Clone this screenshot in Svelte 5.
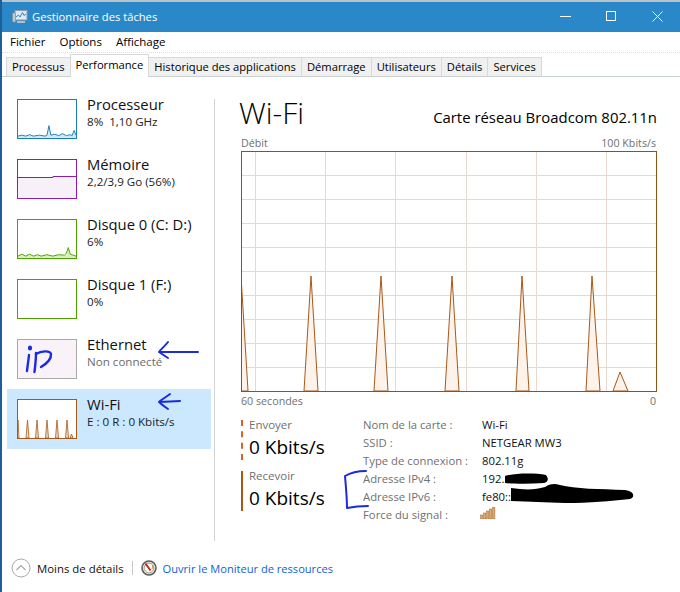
<script>
  const tabs = ['Processus', 'Performance', 'Historique des applications', 'Démarrage', 'Utilisateurs', 'Détails', 'Services'];

  const devices = [
    { name: 'Processeur', sub: '8%  1,10 GHz', kind: 'cpu' },
    { name: 'Mémoire', sub: '2,2/3,9 Go (56%)', kind: 'mem' },
    { name: 'Disque 0 (C: D:)', sub: '6%', kind: 'disk0' },
    { name: 'Disque 1 (F:)', sub: '0%', kind: 'disk1' },
    { name: 'Ethernet', sub: 'Non connecté', kind: 'eth' },
    { name: 'Wi-Fi', sub: 'E : 0 R : 0 Kbits/s', kind: 'wifi' }
  ];

  const details = [
    ['Nom de la carte :', 'Wi-Fi'],
    ['SSID :', 'NETGEAR MW3'],
    ['Type de connexion :', '802.11g'],
    ['Adresse IPv4 :', '192.'],
    ['Adresse IPv6 :', 'fe80::'],
    ['Force du signal :', '']
  ];

  const gridX = [14, 84, 154, 225, 295, 365];
  const gridY = [24, 48, 72, 96, 120, 144, 168, 192, 216];

  const peaks = [
    [[0, 240], [0, 125], [7, 240]],
    [[63, 240], [70, 125], [77, 240]],
    [[133, 240], [140, 125], [147, 240]],
    [[204, 240], [211, 125], [218, 240]],
    [[275, 240], [281, 125], [288, 240]],
    [[345, 240], [351, 125], [359, 240]],
    [[372, 240], [379, 221], [387, 240]]
  ];

  const toPoints = (p) => p.map((q) => q.join(',')).join(' ');

  const thumbs = {
    cpu: '0,38 4,37 8,38 12,36.5 16,38 22,37 28,38 30,37 32,27 34,37 38,36 42,37.5 46,35.5 50,37.5 54,36.5 56,37.5 58,32 60,37',
    disk0: '0,38 4,36 8,38 12,36 16,38 20,36.5 24,38 30,36.5 36,38 42,36.5 48,37 50,35 52,29 54,36 57,37 60,38'
  };

  const wifiSpikes = [9.5, 19, 29, 39, 49];
</script>

<div class="window">
  <header class="titlebar">
    <svg class="app-icon" viewBox="0 0 16 16" width="16" height="16">
      <rect x="3" y="1.5" width="12" height="9.5" fill="#dfe9f2" stroke="#8b9aa8" />
      <path d="M4 8 L6.5 6 L8 8 L10.5 3.5 L12 6.5 L14 5" fill="none" stroke="#3a86c8" />
      <rect x="0.5" y="4" width="3" height="9" fill="#c3cbd2" stroke="#7c8791" stroke-width="0.6" />
      <rect x="5" y="12" width="8" height="2" fill="#b6bfc7" />
    </svg>
    <span class="title">Gestionnaire des tâches</span>
    <div class="winbtns">
      <svg viewBox="0 0 11 11" width="11" height="11"><path d="M0 5.5H11" stroke="#fff" /></svg>
      <svg viewBox="0 0 11 11" width="11" height="11"><rect x="0.5" y="0.5" width="9" height="9" fill="none" stroke="#fff" /></svg>
      <svg viewBox="0 0 11 11" width="11" height="11"><path d="M0.5 0.5L10.5 10.5M10.5 0.5L0.5 10.5" stroke="#fff" /></svg>
    </div>
  </header>

  <nav class="menu">
    <span>Fichier</span>
    <span>Options</span>
    <span>Affichage</span>
  </nav>

  <div class="tabs">
    {#each tabs as tab}
      <div class="tab" class:active={tab === 'Performance'}>{tab}</div>
    {/each}
  </div>

  <main class="content">
    <aside class="sidebar">
      {#each devices as d}
        <div class="device" class:selected={d.kind === 'wifi'}>
          <div class="thumb {d.kind}">
            {#if d.kind === 'cpu' || d.kind === 'disk0'}
              <svg viewBox="0 0 60 40" width="58" height="38" preserveAspectRatio="none">
                <polygon points="0,40 {thumbs[d.kind]} 60,40" class="thumb-fill" />
                <polyline points={thumbs[d.kind]} class="thumb-line" />
              </svg>
            {:else if d.kind === 'mem'}
              <svg viewBox="0 0 58 38" width="58" height="38">
                <polygon points="0,17.5 35,17.5 35,16.5 58,16.5 58,38 0,38" fill="#f8f0f9" />
                <polyline points="0,17.5 35,17.5 35,16.5 58,16.5" fill="none" stroke="#8c1fa8" />
              </svg>
            {:else if d.kind === 'wifi'}
              <svg viewBox="0 0 58 38" width="58" height="38">
                {#each wifiSpikes as s}
                  <polygon points="{s - 1.5},38 {s},20 {s + 1.5},38" fill="#f3d9c0" stroke="#a7591a" stroke-width="0.8" />
                {/each}
                <polygon points="-1,38 0,20 1,38" fill="#f3d9c0" stroke="#a7591a" stroke-width="0.8" />
                <polygon points="52,38 53.5,34 55,38" fill="#f3d9c0" stroke="#a7591a" stroke-width="0.8" />
              </svg>
            {/if}
          </div>
          <div class="device-text">
            <div class="device-name">{d.name}</div>
            <div class="device-sub">{d.sub}</div>
          </div>
        </div>
      {/each}
    </aside>
    <div class="divider"></div>

    <section class="panel">
      <div class="panel-head">
        <h1>Wi-Fi</h1>
        <div class="adapter">Carte réseau Broadcom 802.11n</div>
      </div>

      <div class="axis top"><span>Débit</span><span>100 Kbits/s</span></div>

      <svg class="chart" viewBox="0 0 416 241" width="416" height="241">
        <rect x="0.5" y="0.5" width="415" height="240" fill="#fff" />
        {#each gridX as x}
          <line x1={x + 0.5} x2={x + 0.5} y1="1" y2="240" class="grid" />
        {/each}
        {#each gridY as y}
          <line x1="1" x2="415" y1={y + 0.5} y2={y + 0.5} class="grid" />
        {/each}
        {#each peaks as p}
          <polygon points={toPoints(p)} class="peak" />
        {/each}
        <rect x="0.5" y="0.5" width="415" height="240" fill="none" stroke="#8f5216" />
      </svg>

      <div class="axis bottom"><span>60 secondes</span><span>0</span></div>

      <div class="stats">
        <div class="rates">
          <div class="rate send">
            <div class="rate-label">Envoyer</div>
            <div class="rate-value">0 Kbits/s</div>
          </div>
          <div class="rate recv">
            <div class="rate-label">Recevoir</div>
            <div class="rate-value">0 Kbits/s</div>
          </div>
        </div>

        <div class="details">
          {#each details as [label, value], i}
            <div class="detail-label">{label}</div>
            <div class="detail-value">
              {#if i === 5}
                <svg class="signal" viewBox="0 0 16 12" width="16" height="12">
                  {#each [0, 1, 2, 3, 4] as b}
                    <rect x={b * 3 + 0.5} y={8 - b * 2} width="2.4" height={4 + b * 2} fill="#d9a878" stroke="#a7682c" stroke-width="0.5" />
                  {/each}
                </svg>
              {:else}
                {value}
              {/if}
            </div>
          {/each}
        </div>
      </div>
    </section>
  </main>

  <footer class="footer">
    <button class="less">
      <svg viewBox="0 0 20 20" width="20" height="20">
        <circle cx="10" cy="10" r="9" fill="#fff" stroke="#a9a9a9" />
        <path d="M5.5 12 L10 7.5 L14.5 12" fill="none" stroke="#a9a9a9" stroke-width="1.2" />
      </svg>
      <span>Moins de détails</span>
    </button>
    <div class="sep"></div>
    <svg class="resmon" viewBox="0 0 16 16" width="16" height="16">
      <circle cx="8" cy="8" r="7" fill="#e4e0da" stroke="#5c5a55" stroke-width="1.5" />
      <circle cx="8" cy="8" r="4.8" fill="#fff" stroke="#a8a29a" />
      <path d="M4.5 3.5 L9.5 10.5" stroke="#c8281e" stroke-width="2" />
      <path d="M12 5 L11 9" stroke="#d98a2b" stroke-width="1" />
    </svg>
    <span class="link">Ouvrir le Moniteur de ressources</span>
  </footer>

  <!-- marques faites à la main par-dessus la capture -->
  <svg class="ink" viewBox="0 0 680 592" width="680" height="592">
    <g fill="none" stroke="#1a2be0" stroke-width="2" stroke-linecap="round" stroke-linejoin="round">
      <path d="M30 347.5 L30 348.5" stroke-width="4" />
      <path d="M29 355 C28.5 360 27.5 366 27 371" stroke-width="2.4" />
      <path d="M36 353 C36 360 35 367 34.5 372" stroke-width="2.4" />
      <path d="M36 354 C41 351 50 350 51 354 C51.5 360 46 364 41 367" stroke-width="2.4" />
      <path d="M168 342 C165 346 161 349 159 352 C162 354 165 356 168 358 M160 352 L198 352" />
      <path d="M170 394 C166 397 161 400 159 402 C162 405 165 407 168 409 M160 402 L180 401" />
      <path d="M366 471 C358 471 350 473 345 476 C346 488 347 498 347 508 C352 507 360 506 368 506" />
    </g>
    <g fill="#000">
      <path d="M505 476 C515 473 535 473 546 475 C549 479 548 482 544 483 C530 484 515 484 505 483 Z" />
      <path d="M511 488 C525 490 535 490 545 487 C552 483 555 484 560 485 C575 489 600 489 625 490 C635 491 635 498 630 499 C610 501 590 503 565 503 C545 502 530 502 511 501 Z" />
    </g>
  </svg>
</div>

<style>
  :global(body) {
    margin: 0;
    background: #fff;
  }

  .window {
    position: relative;
    width: 680px;
    height: 592px;
    overflow: hidden;
    box-sizing: border-box;
    border-left: 2px solid #1d5f96;
    background: #fff;
    font-family: 'Open Sans', 'Noto Sans', sans-serif;
    color: #000;
  }

  .titlebar {
    height: 32px;
    box-sizing: border-box;
    border-top: 2px solid #b9c3ca;
    background: #2b88c8;
    display: flex;
    align-items: center;
    padding: 0 0 1px 10px;
    color: #fff;
  }

  .app-icon {
    margin-right: 4px;
  }

  .title {
    font-size: 11.2px;
  }

  .winbtns {
    margin-left: auto;
    display: flex;
    gap: 35px;
    padding-right: 17px;
  }

  .menu {
    height: 19px;
    display: flex;
    gap: 14px;
    align-items: center;
    padding-left: 8px;
    font-size: 11.5px;
  }

  .tabs {
    height: 25px;
    box-sizing: border-box;
    margin-top: 1px;
    border-top: 1px dotted #ddd;
    border-bottom: 1px solid #c9d0d0;
    display: flex;
    align-items: flex-end;
    padding-left: 4px;
  }

  .tab {
    height: 20px;
    line-height: 17px;
    box-sizing: border-box;
    padding: 0 5px;
    margin-bottom: -1px;
    background: #f0f0f0;
    border: 1px solid #d9d9d9;
    border-bottom-color: #c9d0d0;
    margin-right: -1px;
    font-size: 11.2px;
    white-space: nowrap;
  }

  .tab.active {
    height: 23px;
    line-height: 19px;
    background: #fff;
    border-bottom: none;
    position: relative;
    z-index: 1;
  }

  .content {
    display: flex;
    height: 466px;
  }

  .sidebar {
    width: 212px;
    box-sizing: border-box;
    padding: 12px 0 0 5px;
    flex: none;
  }

  .divider {
    width: 1px;
    flex: none;
    background: #d3d3d3;
    margin: 22px 0 2px;
  }

  .device {
    width: 204px;
    height: 60px;
    box-sizing: border-box;
    padding: 10px 0 0 10px;
    display: flex;
    gap: 10px;
  }

  .device.selected {
    background: #cce8ff;
  }

  .thumb {
    width: 60px;
    height: 40px;
    box-sizing: border-box;
    border: 1px solid;
    flex: none;
    background: #fff;
    overflow: hidden;
  }

  .thumb svg {
    display: block;
  }

  .thumb.cpu {
    border-color: #1a7fb8;
    --line: #1a7fb8;
    --fill: #d3e9f4;
  }

  .thumb.mem {
    border-color: #8c1fa8;
  }

  .thumb.disk0,
  .thumb.disk1 {
    border-color: #4da000;
    --line: #4da000;
    --fill: #d9efc6;
  }

  .thumb.eth {
    border-color: #aaa;
    background: #f9f2f9;
  }

  .thumb.wifi {
    border-color: #a7591a;
  }

  .thumb-line {
    fill: none;
    stroke: var(--line);
    stroke-width: 1;
  }

  .thumb-fill {
    fill: var(--fill);
  }

  .device-text {
    margin-top: -4px;
  }

  .device-name {
    font-size: 14.8px;
    line-height: 19px;
    color: #111;
    white-space: nowrap;
  }

  .device-sub {
    font-size: 11.6px;
    line-height: 16px;
    color: #222;
    white-space: pre;
  }

  .device:nth-child(5) .device-sub {
    color: #6d6d6d;
  }

  .panel {
    flex: 1;
    padding: 0 23px 0 24px;
    min-width: 0;
  }

  .panel-head {
    display: flex;
    justify-content: space-between;
    align-items: flex-end;
    height: 44px;
    margin-top: 9px;
  }

  h1 {
    margin: 0 0 -2px;
    font-size: 30px;
    font-weight: 300;
    line-height: 38px;
  }

  .adapter {
    font-size: 14.9px;
    line-height: 26px;
    white-space: nowrap;
  }

  .axis {
    display: flex;
    justify-content: space-between;
    font-size: 10.7px;
    color: #707070;
    line-height: 14px;
    width: 415px;
    margin-left: 2px;
  }

  .axis.top {
    margin-top: 6px;
    margin-bottom: 1px;
  }

  .axis.bottom {
    margin-top: 2px;
  }

  .chart {
    display: block;
    margin-left: 2px;
  }

  .grid {
    stroke: #e8d8ce;
    stroke-width: 1;
  }

  .peak {
    fill: #fdf3ea;
    stroke: #a7591a;
    stroke-width: 1;
  }

  .stats {
    display: flex;
    margin-top: 8px;
  }

  .rates {
    width: 122px;
    margin: 4px 0 0 2px;
    flex: none;
  }

  .rate {
    height: 40px;
    padding-left: 6px;
    margin-bottom: 11px;
  }

  .rate.send {
    border-left: 2px dashed #d9622b;
  }

  .rate.recv {
    border-left: 2px solid #a7591a;
  }

  .rate-label {
    font-size: 11.5px;
    color: #707070;
    line-height: 10px;
  }

  .rate-value {
    font-size: 19px;
    line-height: 35px;
    white-space: nowrap;
  }

  .details {
    display: grid;
    grid-template-columns: 119px auto;
    grid-auto-rows: 18px;
    font-size: 11.3px;
    line-height: 18px;
    align-content: start;
  }

  .detail-label {
    color: #707070;
    white-space: nowrap;
  }

  .detail-value {
    color: #111;
    white-space: nowrap;
  }

  .signal {
    display: block;
    margin: 1px 0 0 -2px;
  }

  .footer {
    height: 50px;
    display: flex;
    align-items: center;
    padding: 0 0 4px 9px;
  }

  .less {
    all: unset;
    display: flex;
    align-items: center;
    gap: 6px;
    font-size: 11.4px;
    color: #111;
  }

  .sep {
    width: 1px;
    height: 14px;
    background: #c8c8c8;
    margin: 0 8px;
  }

  .resmon {
    margin-right: 6px;
  }

  .link {
    color: #0b5fd8;
    font-size: 11.1px;
  }

  .ink {
    position: absolute;
    left: -2px;
    top: 0;
    pointer-events: none;
  }
</style>
